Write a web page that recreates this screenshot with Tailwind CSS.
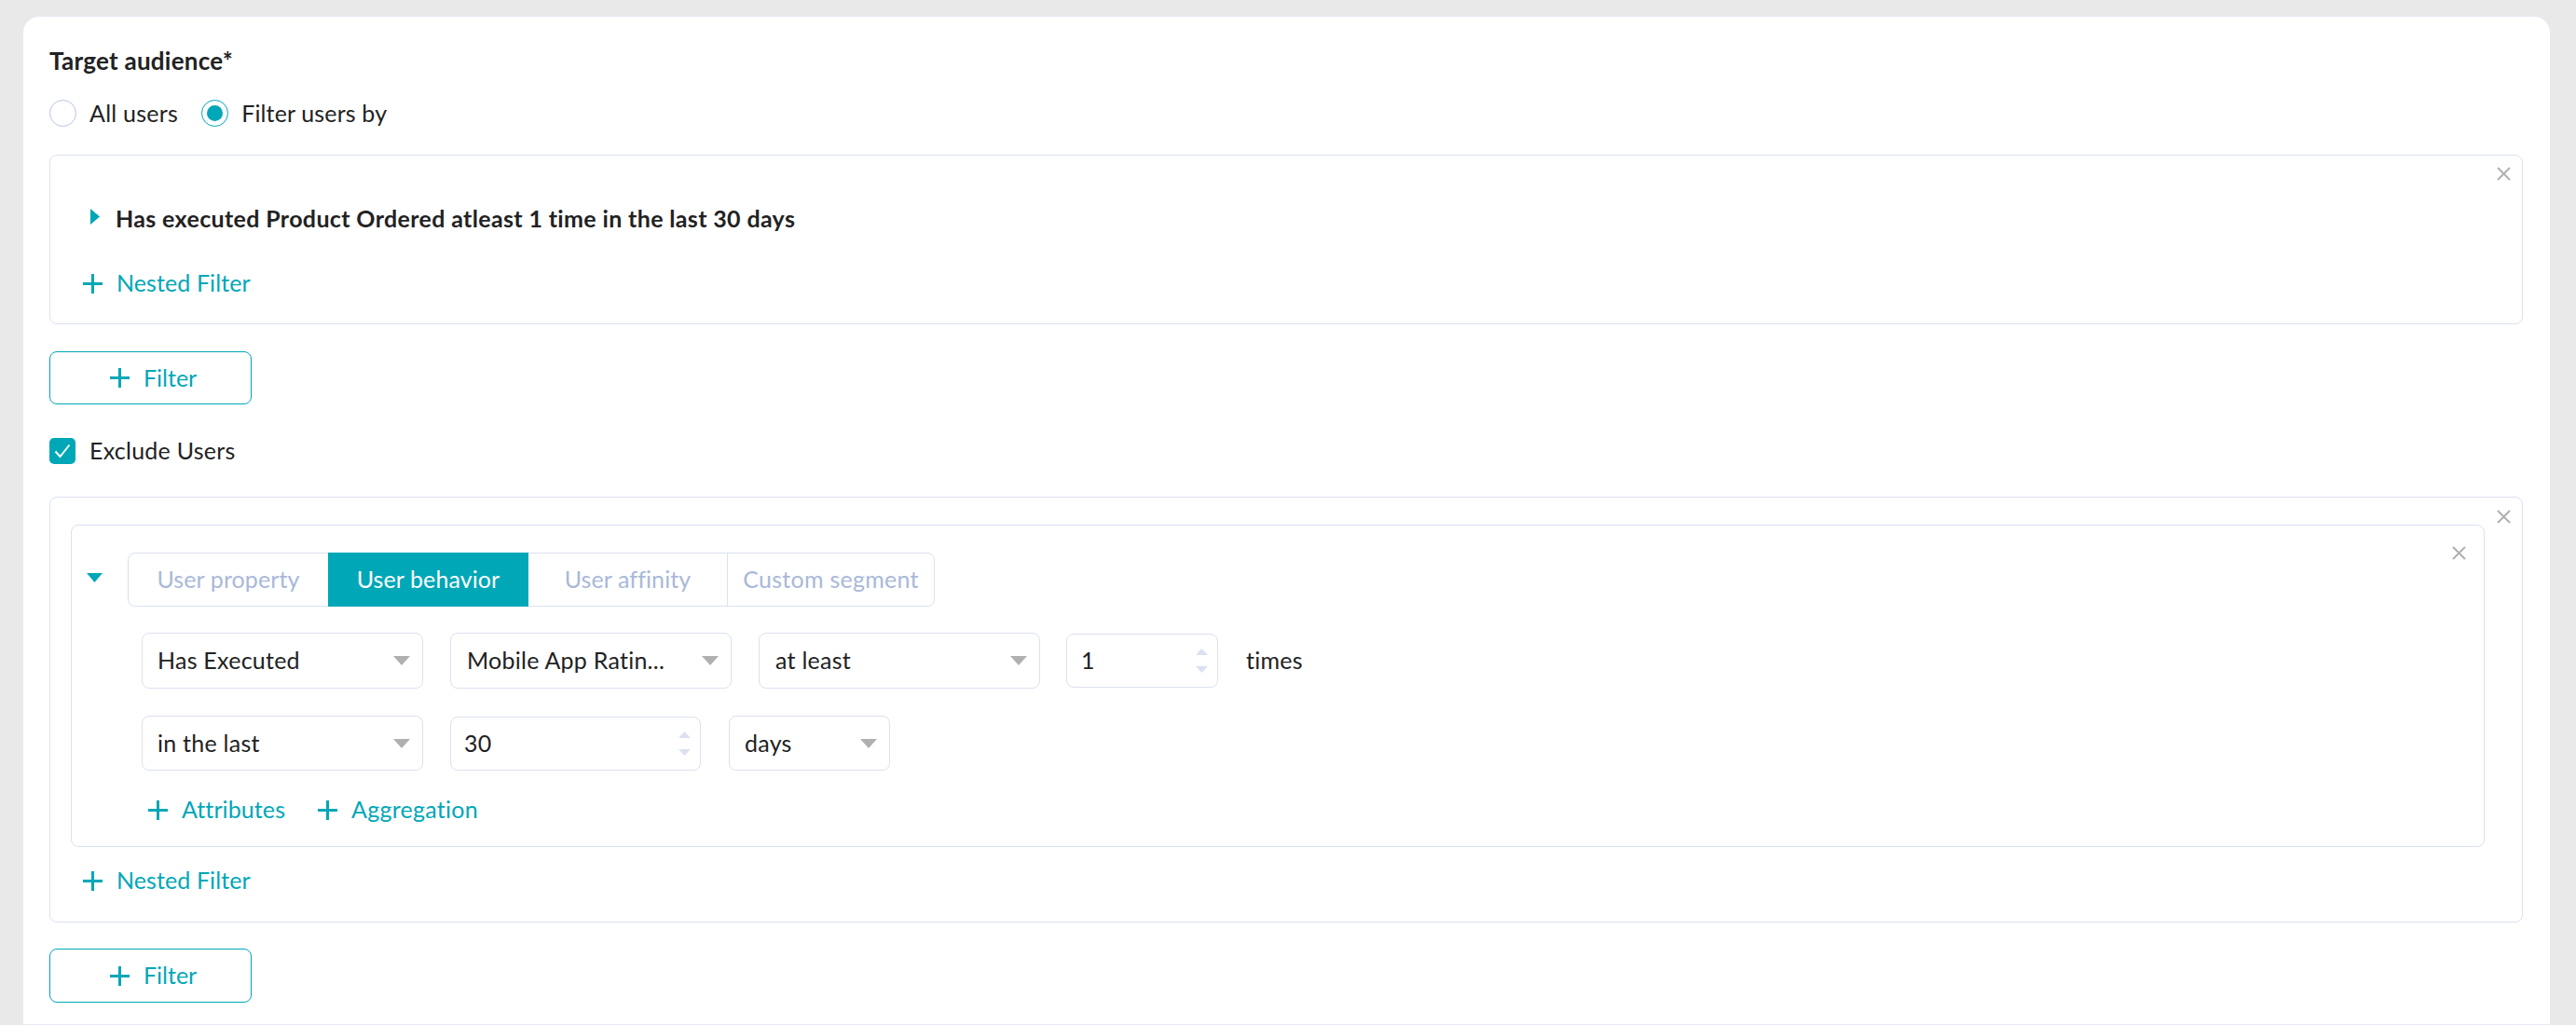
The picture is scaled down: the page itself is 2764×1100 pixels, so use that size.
<!DOCTYPE html>
<html lang="en">
<head>
    <meta charset="UTF-8">
    <title>Target audience</title>
    <script src="https://cdn.jsdelivr.net/npm/@tailwindcss/browser@4"></script>
</head>
<body class="bg-[#e9e9e9] h-[1100px] overflow-hidden pt-[17px] pl-[24px] font-['Lato',sans-serif] text-[25px] tracking-[0.25px] text-[#222222]">
    <div class="w-[2713px] h-[1083px] bg-white rounded-t-[18px] border border-[#e6eaf4] pl-[28px] pr-[29px] pt-[30px]">
        <div class="h-[34px] flex items-center text-[26px] font-bold">Target audience*</div>

        <div class="h-[29px] mt-[25px] flex items-center">
            <span class="w-[29px] h-[29px] rounded-full border border-[#b9c4e0] bg-white"></span>
            <span class="ml-[14px]">All users</span>
            <span class="ml-[25px] w-[29px] h-[29px] rounded-full border border-[#00a7b7] flex items-center justify-center">
                <span class="w-[17px] h-[17px] rounded-full bg-[#00a7b7]"></span>
            </span>
            <span class="ml-[14px] tracking-[0.15px]">Filter users by</span>
        </div>

        <div class="relative mt-[30px] border border-[#dbe1f0] rounded-[8px] pl-[35px] pt-[51px] pb-[26px]">
            <svg class="absolute top-[12px] right-[12px] w-[15px] h-[15px]" viewBox="0 0 15 15"><path d="M1 1l13 13M14 1L1 14" stroke="#b0b0b0" stroke-width="2" fill="none"/></svg>
            <div class="h-[34px] flex items-center font-bold">
                <svg class="ml-[8px] w-[10px] h-[17px] -mt-[5px]" viewBox="0 0 10 17"><path d="M0 0l10 8.5L0 17z" fill="#00a7b7"/></svg>
                <span class="ml-[17px] tracking-[0.35px]">Has executed Product Ordered atleast 1 time in the last 30 days</span>
            </div>
            <div class="h-[34px] mt-[35px] flex items-center text-[#00a7b7]">
                <svg class="w-[21px] h-[21px]" viewBox="0 0 21 21"><path d="M10.5 0v21M0 10.5h21" stroke="#00a7b7" stroke-width="3" fill="none"/></svg>
                <span class="ml-[15px] tracking-[0.1px]">Nested Filter</span>
            </div>
        </div>

        <button class="mt-[29px] w-[217px] h-[57px] border border-[#00a7b7] rounded-[8px] flex items-center pl-[64px] text-[#00a7b7]">
            <svg class="w-[21px] h-[21px]" viewBox="0 0 21 21"><path d="M10.5 0v21M0 10.5h21" stroke="#00a7b7" stroke-width="3" fill="none"/></svg>
            <span class="ml-[15px] tracking-normal">Filter</span>
        </button>

        <div class="h-[28px] mt-[36px] flex items-center">
            <span class="w-[28px] h-[28px] rounded-[5px] bg-[#00a7b7] flex items-center justify-center">
                <svg class="w-[18px] h-[16px]" viewBox="0 0 18 16"><path d="M1.5 8.5L6.5 14L16.5 1.5" stroke="#ffffff" stroke-width="2" fill="none"/></svg>
            </span>
            <span class="ml-[15px]">Exclude Users</span>
        </div>

        <div class="relative mt-[35px] border border-[#dbe1f0] rounded-[8px] pt-[29px] pl-[22px] pr-[40px] pb-[27px]">
            <svg class="absolute top-[13px] right-[12px] w-[15px] h-[15px]" viewBox="0 0 15 15"><path d="M1 1l13 13M14 1L1 14" stroke="#b0b0b0" stroke-width="2" fill="none"/></svg>

            <div class="relative border border-[#dbe1f0] rounded-[8px] pt-[29px] pb-[22px]">
                <svg class="absolute top-[22px] right-[19px] w-[15px] h-[15px]" viewBox="0 0 15 15"><path d="M1 1l13 13M14 1L1 14" stroke="#b0b0b0" stroke-width="2" fill="none"/></svg>

                <div class="flex items-center pl-[16px]">
                    <svg class="w-[17px] h-[10px] -mt-[5px]" viewBox="0 0 17 10"><path d="M0 0h17L8.5 10z" fill="#00a7b7"/></svg>
                    <div class="ml-[27px] flex h-[58px] border border-[#dbe1f0] rounded-[8px] text-[#a9b8d9]">
                        <div class="w-[214px] flex items-center justify-center tracking-[0.1px]">User property</div>
                        <div class="w-[215px] -my-px flex items-center justify-center bg-[#00a7b7] text-white tracking-[0.1px]">User behavior</div>
                        <div class="w-[214px] flex items-center justify-center border-r border-[#dbe1f0] tracking-[0.1px]">User affinity</div>
                        <div class="w-[221px] flex items-center justify-center">Custom segment</div>
                    </div>
                </div>

                <div class="mt-[28px] pl-[75px] flex items-center gap-[29px]">
                    <div class="w-[302px] h-[60px] border border-[#dbe1f0] rounded-[8px] pl-[16px] pr-[13px] flex items-center justify-between">
                        <span>Has Executed</span>
                        <svg class="w-[18px] h-[10px]" viewBox="0 0 18 10"><path d="M0 0h18L9 10z" fill="#b0b0b0"/></svg>
                    </div>
                    <div class="w-[302px] h-[60px] border border-[#dbe1f0] rounded-[8px] pl-[17px] pr-[13px] flex items-center justify-between">
                        <span>Mobile App Ratin...</span>
                        <svg class="w-[18px] h-[10px]" viewBox="0 0 18 10"><path d="M0 0h18L9 10z" fill="#b0b0b0"/></svg>
                    </div>
                    <div class="w-[302px] h-[60px] border border-[#dbe1f0] rounded-[8px] pl-[17px] pr-[13px] flex items-center justify-between">
                        <span>at least</span>
                        <svg class="w-[18px] h-[10px]" viewBox="0 0 18 10"><path d="M0 0h18L9 10z" fill="#b0b0b0"/></svg>
                    </div>
                    <div class="-ml-px w-[163px] h-[58px] border border-[#dbe1f0] rounded-[8px] pl-[15px] pr-[10px] flex items-center justify-between">
                        <span>1</span>
                        <span class="flex flex-col gap-[12px]">
                            <svg class="w-[13px] h-[7px]" viewBox="0 0 13 7"><path d="M0 7h13L6.5 0z" fill="#dbe1f0"/></svg>
                            <svg class="w-[13px] h-[7px]" viewBox="0 0 13 7"><path d="M0 0h13L6.5 7z" fill="#dbe1f0"/></svg>
                        </span>
                    </div>
                    <span class="ml-px">times</span>
                </div>

                <div class="mt-[29px] pl-[75px] flex items-center gap-[30px]">
                    <div class="w-[302px] h-[59px] mr-[-1px] border border-[#dbe1f0] rounded-[8px] pl-[16px] pr-[13px] flex items-center justify-between">
                        <span>in the last</span>
                        <svg class="w-[18px] h-[10px]" viewBox="0 0 18 10"><path d="M0 0h18L9 10z" fill="#b0b0b0"/></svg>
                    </div>
                    <div class="w-[269px] h-[58px] border border-[#dbe1f0] rounded-[8px] pl-[14px] pr-[10px] flex items-center justify-between">
                        <span>30</span>
                        <span class="flex flex-col gap-[12px]">
                            <svg class="w-[13px] h-[7px]" viewBox="0 0 13 7"><path d="M0 7h13L6.5 0z" fill="#dbe1f0"/></svg>
                            <svg class="w-[13px] h-[7px]" viewBox="0 0 13 7"><path d="M0 0h13L6.5 7z" fill="#dbe1f0"/></svg>
                        </span>
                    </div>
                    <div class="w-[173px] h-[59px] border border-[#dbe1f0] rounded-[8px] pl-[16px] pr-[13px] flex items-center justify-between">
                        <span>days</span>
                        <svg class="w-[18px] h-[10px]" viewBox="0 0 18 10"><path d="M0 0h18L9 10z" fill="#b0b0b0"/></svg>
                    </div>
                </div>

                <div class="mt-[25px] ml-[82px] h-[34px] flex items-center text-[#00a7b7]">
                    <svg class="w-[21px] h-[21px]" viewBox="0 0 21 21"><path d="M10.5 0v21M0 10.5h21" stroke="#00a7b7" stroke-width="3" fill="none"/></svg>
                    <span class="ml-[15px] tracking-[0.1px]">Attributes</span>
                    <svg class="ml-[35px] w-[21px] h-[21px]" viewBox="0 0 21 21"><path d="M10.5 0v21M0 10.5h21" stroke="#00a7b7" stroke-width="3" fill="none"/></svg>
                    <span class="ml-[15px]">Aggregation</span>
                </div>
            </div>

            <div class="h-[34px] mt-[19px] pl-[13px] flex items-center text-[#00a7b7]">
                <svg class="w-[21px] h-[21px]" viewBox="0 0 21 21"><path d="M10.5 0v21M0 10.5h21" stroke="#00a7b7" stroke-width="3" fill="none"/></svg>
                <span class="ml-[15px] tracking-[0.1px]">Nested Filter</span>
            </div>
        </div>

        <button class="mt-[28px] w-[217px] h-[58px] border border-[#00a7b7] rounded-[8px] flex items-center pl-[64px] text-[#00a7b7]">
            <svg class="w-[21px] h-[21px]" viewBox="0 0 21 21"><path d="M10.5 0v21M0 10.5h21" stroke="#00a7b7" stroke-width="3" fill="none"/></svg>
            <span class="ml-[15px] tracking-normal">Filter</span>
        </button>
    </div>
</body>
</html>
